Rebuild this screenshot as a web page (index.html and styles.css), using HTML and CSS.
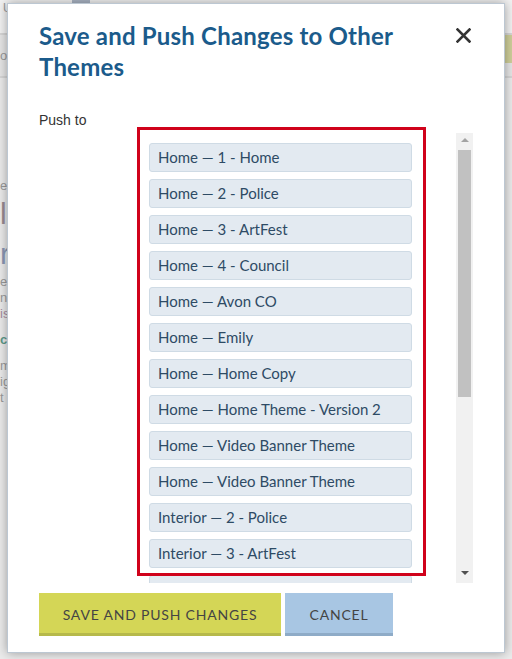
FILE: index.html
```html
<!DOCTYPE html>
<html>
<head>
<meta charset="utf-8">
<link rel="stylesheet" href="styles.css">
</head>
<body>
<div class="page">
  <div class="page-top"><span class="page-u">U</span><span class="page-tab"></span></div>
  <div class="page-bar"><span class="page-o">o</span><span class="page-btn"></span></div>
  <div class="page-body">
    <p class="pl">e</p>
    <p class="pl big">l</p>
    <p class="pl big blue">r</p>
    <p class="pl">e</p>
    <p class="pl">n</p>
    <p class="pl pink">is</p>
    <p class="pl green">c</p>
    <p class="pl">m</p>
    <p class="pl">ig</p>
    <p class="pl">t</p>
  </div>
</div>

<div class="modal">
  <div class="modal-head">
    <h1 class="modal-title">Save and Push Changes to Other Themes</h1>
    <button class="close" aria-label="Close">
      <svg width="15" height="15" viewBox="0 0 15 15"><path d="M1.5 1.5 L13.5 13.5 M13.5 1.5 L1.5 13.5" stroke="#333" stroke-width="2.6" stroke-linecap="square" fill="none"/></svg>
    </button>
  </div>
  <div class="field">
    <label class="field-label">Push to</label>
    <div class="picker">
      <div class="picker-list">
        <div class="item">Home — 1 - Home</div>
        <div class="item">Home — 2 - Police</div>
        <div class="item">Home — 3 - ArtFest</div>
        <div class="item">Home — 4 - Council</div>
        <div class="item">Home — Avon CO</div>
        <div class="item">Home — Emily</div>
        <div class="item">Home — Home Copy</div>
        <div class="item">Home — Home Theme - Version 2</div>
        <div class="item">Home — Video Banner Theme</div>
        <div class="item">Home — Video Banner Theme</div>
        <div class="item">Interior — 2 - Police</div>
        <div class="item">Interior — 3 - ArtFest</div>
        <div class="item">Interior — 4 - Council</div>
      </div>
      <div class="scrollbar">
        <span class="arrow up"></span>
        <span class="thumb"></span>
        <span class="arrow down"></span>
      </div>
      <div class="highlight"></div>
    </div>
  </div>
  <div class="actions">
    <button class="btn btn-save">SAVE AND PUSH CHANGES</button>
    <button class="btn btn-cancel">CANCEL</button>
  </div>
</div>
</body>
</html>
```

FILE: styles.css
```css
* { box-sizing: border-box; }
html, body { margin: 0; padding: 0; }
body {
  width: 512px;
  height: 659px;
  overflow: hidden;
  background: #ebebeb;
  font-family: "Liberation Sans", Arial, sans-serif;
  position: relative;
}

/* background page (dimmed) */
.page { color: #8a8a8a; }
.page-top {
  height: 33px;
  background: #f2f2f2;
  display: flex;
  align-items: flex-start;
  gap: 60px;
}
.page-u { font-size: 12px; padding-left: 3px; line-height: 16px; color: #9a9a9a; }
.page-tab { width: 18px; height: 8px; background: #aab4c4; }
.page-bar {
  height: 45px;
  border-top: 2px solid #d6d6d6;
  border-bottom: 2px solid #d6d6d6;
  background: #e6e6e6;
  display: flex;
  justify-content: space-between;
  align-items: center;
}
.page-o { font-size: 13px; color: #9a9a9a; }
.page-btn { width: 10px; height: 28px; background: #cfcf9a; margin-top: -14px; }
.page-body { padding-top: 100px; }
.pl { margin: 0; font-size: 13px; line-height: 16px; color: #9a9a9a; }
.pl.big { font-size: 30px; line-height: 40px; color: #9a8c92; }
.pl.blue { color: #8c98b4; }
.pl.pink { color: #a88ca0; }
.pl.green { color: #5e9a8a; font-weight: bold; margin: 10px 0; }

/* modal */
.modal {
  position: absolute;
  left: 7px;
  top: 3px;
  width: 498px;
  height: 650px;
  background: #fff;
  border: 1px solid #bcc7d2;
  box-shadow: 0 0 10px rgba(0, 0, 0, 0.35);
  padding: 16px 31px 0 31px;
}
.modal-head {
  display: flex;
  justify-content: space-between;
  align-items: flex-start;
}
.modal-title {
  margin: 0;
  width: 380px;
  font-family: Lato, "Open Sans", sans-serif;
  font-weight: 700;
  font-size: 24px;
  line-height: 31px;
  color: #1b5b8b;
  letter-spacing: 0.2px;
}
.close {
  border: 0;
  background: none;
  padding: 0;
  margin-top: 8px;
  margin-right: 2px;
  width: 15px;
  height: 15px;
  display: block;
}
.close svg { display: block; }

.field {
  display: flex;
  margin-top: 30px;
}
.field-label {
  width: 103px;
  flex: none;
  font-size: 14px;
  line-height: 16px;
  color: #333;
}
.picker {
  position: relative;
  margin-top: 21px;
  width: 331px;
  height: 450px;
  display: flex;
}
.picker-list {
  flex: 1;
  overflow: hidden;
  padding: 10px 0 0 7px;
}
.item {
  width: 263px;
  height: 29px;
  margin-bottom: 7px;
  background: #e3eaf1;
  border: 1px solid #cfdbe5;
  border-radius: 3px;
  padding: 0 8px;
  font-family: Lato, "Open Sans", sans-serif;
  font-size: 15px;
  line-height: 27px;
  color: #2e4b65;
  white-space: nowrap;
}
.scrollbar {
  width: 17px;
  flex: none;
  background: #f1f1f1;
  display: flex;
  flex-direction: column;
  align-items: center;
  padding: 5px 0;
}
.arrow {
  width: 0;
  height: 0;
  border-left: 4px solid transparent;
  border-right: 4px solid transparent;
}
.arrow.up { border-bottom: 4px solid #a3a3a3; }
.arrow.down { border-top: 4px solid #505050; margin-top: auto; margin-bottom: 3px; }
.thumb {
  width: 13px;
  height: 247px;
  background: #c1c1c1;
  margin-top: 8px;
}
.highlight {
  position: absolute;
  left: -5px;
  top: -6px;
  width: 289px;
  height: 449px;
  border: 3px solid #d0021b;
  pointer-events: none;
}

.actions {
  margin-top: 10px;
  display: flex;
  gap: 4px;
}
.btn {
  height: 43px;
  border: 0;
  border-bottom: 3px solid transparent;
  font-family: Lato, "Open Sans", sans-serif;
  font-size: 14px;
  letter-spacing: 0.8px;
  color: #444;
  padding: 3px 0 0 0;
}
.btn-save {
  width: 242px;
  background: #d4d656;
  border-bottom-color: #b6b94a;
}
.btn-cancel {
  width: 108px;
  background: #a8c6e3;
  border-bottom-color: #8eabc7;
}
```
